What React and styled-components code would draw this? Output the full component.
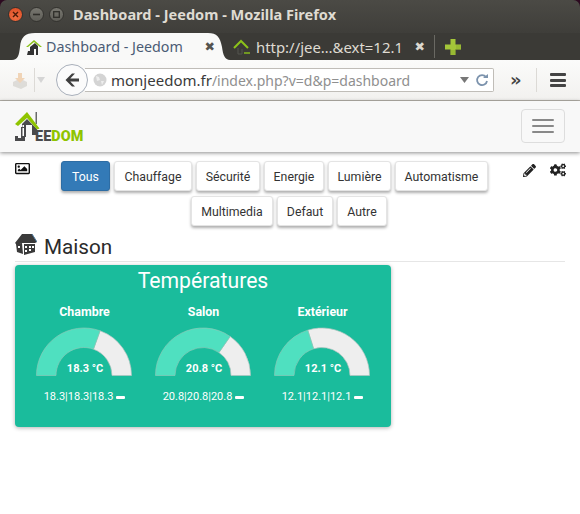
import React from "react";
import styled, { createGlobalStyle } from "styled-components";
import { FaCogs, FaPencilAlt, FaRegImage } from "react-icons/fa";

const Global = createGlobalStyle`
  html, body { margin: 0; padding: 0; background: #fff; }
  * { box-sizing: border-box; }
`;
const Page = styled.div`
  width: 580px; height: 514px; overflow: hidden; background: #fff;
  font-family: Roboto, "Liberation Sans", sans-serif; color: #333;
`;
const Frame = styled.div`
  background: #2c0a20;
`;
const TitleBar = styled.div`
  height: 33px; display: flex; align-items: center; padding: 0 0 5px 8px;
  background: linear-gradient(#4b4a45, #3f3e3a); border-radius: 7px 7px 0 0;
`;
const WinButton = styled.span`
  width: 15px; height: 15px; border-radius: 50%; margin-right: 5.5px;
  display: flex; align-items: center; justify-content: center;
  background: ${p => p.$close ? "radial-gradient(circle at 50% 70%, #ef7043, #dc4a22)" : "linear-gradient(#77766f, #5f5e58)"};
  border: 1px solid #33322e;
  color: ${p => p.$close ? "#4a1a08" : "#2f2e2a"};
`;
const WinTitle = styled.div`
  margin-left: 3.5px; font: 700 14.55px "Noto Sans", "Open Sans", sans-serif; color: #dfdbd2; white-space: nowrap;
`;
const TabStrip = styled.div`
  height: 27px; display: flex; align-items: stretch; padding-left: 12px;
  background: #3b3a36;
`;
const ActiveTab = styled.div`
  position: relative; width: 218px; display: flex; align-items: center; padding: 0 0 0 13px;
  color: #4b5c75; font: 400 14.3px "Noto Sans", sans-serif; white-space: nowrap;
`;
const TabShape = styled.svg`
  position: absolute; left: 0; top: -1px; width: 218px; height: 28px;
`;
const TabInner = styled.div`
  position: relative; display: flex; align-items: center; width: 100%;
`;
const TabLabel = styled.span`
  margin-left: 3px; flex: 1;
`;
const TabClose = styled.span`
  font: 700 12.5px "DejaVu Sans", sans-serif; color: ${p => p.$light ? "#dcd8cf" : "#55544f"};
  margin-right: ${p => p.$light ? "0" : "15px"};
`;
const OtherTab = styled.div`
  display: flex; align-items: center; margin-left: 3px; width: 201px; padding-right: 9px;
  color: #dfdbd2; font: 400 14.9px "Noto Sans", sans-serif; white-space: nowrap;
`;
const OtherLabel = styled.span`
  margin-left: 5px; flex: 1;
`;
const StripDivider = styled.span`
  width: 1px; height: 23px; background: #6a6963; align-self: center;
`;
const PlusBox = styled.span`
  margin-left: 10px; align-self: center; display: flex;
`;
const Toolbar = styled.div`
  height: 41px; display: flex; align-items: center; padding: 0 12px;
  background: linear-gradient(#fbfbfa, #f2f1ef); border-bottom: 1px solid #b6b2aa;
`;
const BackCircle = styled.span`
  width: 32px; height: 32px; border-radius: 50%; background: #fbfbfb; border: 1px solid #a9b0bb;
  display: flex; align-items: center; justify-content: center; margin-left: 10px; position: relative; z-index: 1; flex: none;
`;
const UrlBar = styled.div`
  width: 409px; height: 24px; margin-left: -3px; background: #fff; border: 1px solid #c0bdb8; border-left: 0; border-radius: 0 2px 2px 0;
  display: flex; align-items: center; padding: 0 4px 0 8px; flex: none;
  font: 400 15px "Noto Sans", sans-serif; white-space: nowrap;
`;
const UrlHost = styled.span`
  color: #3b3b3b; margin-left: 4px;
`;
const UrlPath = styled.span`
  color: #8f8f8f; flex: 1; font-size: 14px;
`;
const ToolDivider = styled.span`
  width: 1px; height: 24px; background: #dcdad6; margin: ${p => p.$m};
`;
const ToolGlyph = styled.span`
  font: 700 18px "DejaVu Sans", sans-serif; color: #444; margin-left: 16px; line-height: 1;
`;
const MenuBars = styled.span`
  display: flex; flex-direction: column; gap: 2.5px; margin-left: 13px;
`;
const MenuBar = styled.span`
  width: 16px; height: 3px; background: #444; border-radius: 1px;
`;
const Navbar = styled.div`
  height: 51px; background: #f8f8f8; display: flex; align-items: flex-start; justify-content: space-between;
  padding: 8px 15px 0; box-shadow: 0 1px 4px rgba(0,0,0,.45); position: relative;
`;
const Logo = styled.div`
  position: relative; width: 70px; height: 32px; margin-top: 2px;
`;
const LogoText = styled.span`
  position: absolute; left: 20px; bottom: 0; font: 900 14.4px/13px Roboto, sans-serif; color: #4a4a4c; letter-spacing: .1px;
`;
const LogoGreen = styled.span`
  color: #8fc400;
`;
const Burger = styled.div`
  width: 44px; height: 34px; border: 1px solid #ddd; border-radius: 4px; display: flex; flex-direction: column;
  align-items: center; justify-content: center; gap: 4px;
`;
const BurgerBar = styled.span`
  width: 22px; height: 2px; background: #888; border-radius: 1px;
`;
const FilterBar = styled.div`
  display: flex; padding: 9px 14px 0 15px; align-items: flex-start;
`;
const ImageIcon = styled.div`
  width: 15px; height: 15px; font-size: 15px; color: #111; display: flex;
`;
const FilterRows = styled.div`
  flex: 1; display: flex; flex-direction: column; gap: 5px;
`;
const FilterRow = styled.div`
  display: flex; justify-content: center; gap: 4px;
  padding: ${p => p.$second ? "0 0 0 25px" : "0 4px 0 0"};
`;
const FilterButton = styled.div`
  height: 30px; width: ${p => p.$w}px; padding-top: 1px; display: flex; align-items: center; justify-content: center; font-size: 12.3px; white-space: nowrap;
  border-radius: 3px; border: 1px solid ${p => p.$active ? "#2e6da4" : "#e4e4e4"};
  background: ${p => p.$active ? "#337ab7" : "#fff"}; color: ${p => p.$active ? "#fff" : "#333"};
  box-shadow: 0 2px 3px rgba(0,0,0,.32);
`;
const ActionIcons = styled.div`
  display: flex; gap: 14px; color: #222; font-size: 13px; padding-top: 1px; align-items: center;
`;
const SectionHead = styled.div`
  margin: 7px 15px 0; height: 29px; display: flex; align-items: flex-start; gap: 7px; border-bottom: 1px solid #e6e6e6;
  font-size: 20.7px; line-height: 28px; color: #2b2b2b;
`;
const Card = styled.div`
  width: 376px; margin: 3px 0 0 15px; height: 162px; border-radius: 4px; background: #1abc9c; color: #fff; text-align: center;
  box-shadow: 0 1px 4px rgba(0,0,0,.3);
`;
const CardTitle = styled.div`
  font-size: 21.2px; line-height: 32px; height: 32px;
`;
const Gauges = styled.div`
  display: flex; justify-content: center; margin-top: 8px; padding-left: 1px;
`;
const Widget = styled.div`
  width: 119px; display: flex; flex-direction: column; align-items: center;
`;
const WidgetName = styled.div`
  font-weight: 700; font-size: 12.4px; line-height: 14px;
`;
const GaugeBox = styled.div`
  position: relative; width: 119px; height: 50px; margin-top: 7px;
`;
const GaugeSvg = styled.svg`
  display: block; width: 119px; height: 50px;
`;
const GaugeValue = styled.div`
  position: absolute; left: 1px; right: 0; bottom: 0; font-weight: 700; font-size: 11px; line-height: 14px;
`;
const History = styled.div`
  margin-top: 14px; font-size: 11px; line-height: 14px; display: flex; align-items: center; gap: 3px; white-space: nowrap;
`;
const Dash = styled.span`
  width: 9px; height: 3px; background: #fff; border-radius: 1px;
`;

function Favicon({ size = 18 }) {
  return (
    <svg width={size} height={size} viewBox="0 0 18 18">
      <path d="M5 17V9l5-4 3 3v9h-2v-6H9v6z" fill="#333" />
      <path d="M1 9l8-7 8 7-2 0-6-5-6 5z" fill="#8cc21a" />
      <path d="M3 13h2v4H2z" fill="#333" />
    </svg>
  );
}

function Gauge({ value }) {
  const cx = 59, cy = 49.5, R = 47.5, r = 28;
  const a = Math.PI * (1 - value / 30);
  const pt = (rad, ang) => `${(cx + rad * Math.cos(ang)).toFixed(2)} ${(cy - rad * Math.sin(ang)).toFixed(2)}`;
  const fill = `M${pt(R, Math.PI)} A${R} ${R} 0 0 1 ${pt(R, a)} L${pt(r, a)} A${r} ${r} 0 0 0 ${pt(r, Math.PI)} Z`;
  const rest = `M${pt(R, a)} A${R} ${R} 0 0 1 ${pt(R, 0)} L${pt(r, 0)} A${r} ${r} 0 0 0 ${pt(r, a)} Z`;
  return (
    <GaugeSvg viewBox="0 0 119 50">
      <path d={rest} fill="#eeeeee" stroke="#b5c4c0" strokeWidth=".7" />
      <path d={fill} fill="#4fe0c0" stroke="#8cc9b8" strokeWidth=".7" />
    </GaugeSvg>
  );
}

const widgets = [
  { name: "Chambre", value: 18.3 },
  { name: "Salon", value: 20.8 },
  { name: "Extérieur", value: 12.1 },
];
const row1 = [["Tous", 49], ["Chauffage", 78], ["Sécurité", 64], ["Energie", 60], ["Lumière", 63], ["Automatisme", 93]];
const row2 = [["Multimedia", 82], ["Defaut", 56], ["Autre", 50]];

export default function App() {
  return (
    <Page>
      <Global />
      <Frame>
        <TitleBar>
          <WinButton $close>
            <svg width="7" height="7" viewBox="0 0 7 7"><path d="M1 1l5 5M6 1L1 6" stroke="currentColor" strokeWidth="1.4" /></svg>
          </WinButton>
          <WinButton>
            <svg width="7" height="7" viewBox="0 0 7 7"><path d="M0 3.5h7" stroke="currentColor" strokeWidth="1.6" /></svg>
          </WinButton>
          <WinButton>
            <svg width="7" height="7" viewBox="0 0 7 7"><rect x=".7" y=".7" width="5.6" height="5.6" fill="none" stroke="currentColor" strokeWidth="1.3" /></svg>
          </WinButton>
          <WinTitle>Dashboard - Jeedom - Mozilla Firefox</WinTitle>
        </TitleBar>
      </Frame>
      <TabStrip>
        <ActiveTab>
          <TabShape viewBox="0 0 218 28">
            <path d="M0 28C6 28 7 23 8 15 9 5 13 1 23 1H196C205 1 208 5 210 15 211 23 213 28 218 28Z" fill="#f9f9f8" />
          </TabShape>
          <TabInner>
            <Favicon />
            <TabLabel>Dashboard - Jeedom</TabLabel>
            <TabClose>✖</TabClose>
          </TabInner>
        </ActiveTab>
        <OtherTab>
          <svg width="18" height="18" viewBox="0 0 18 18">
            <path d="M1 10l7-7 7 7" fill="none" stroke="#8cc21a" strokeWidth="2" />
            <path d="M11 15h6" stroke="#8cc21a" strokeWidth="1.4" />
            <path d="M5 10v6h4v-5" fill="none" stroke="#55544f" strokeWidth="1" />
          </svg>
          <OtherLabel>http://jee…&amp;ext=12.1</OtherLabel>
          <TabClose $light>✖</TabClose>
        </OtherTab>
        <StripDivider />
        <PlusBox>
          <svg width="16" height="16" viewBox="0 0 16 16">
            <path d="M5.5 0h5v5.500h5.500v5h-5.500v5.500h-5v-5.500H0v-5h5.500z" fill="#a4c639" />
            <path d="M5.500 11h5v5h-5zM11 6h5v5h-5z" fill="#86a52b" opacity=".4" />
          </svg>
        </PlusBox>
      </TabStrip>
      <Toolbar>
        <svg width="16" height="17" viewBox="0 0 16 17" opacity=".75">
          <path d="M1 10l4-2h6l4 2v4l-6 3-8-3z" fill="#d6d4d0" />
          <path d="M6 1h4v5h3l-5 5-5-5h3z" fill="#eec9a3" />
        </svg>
        <ToolDivider $m="0 1px 0 6px" />
        <svg width="10" height="6" viewBox="0 0 10 6">
          <path d="M1 0h8L5 6z" fill="#d5d5d5" />
        </svg>
        <BackCircle>
          <svg width="16" height="16" viewBox="0 0 16 16">
            <path d="M8 1.500L1.500 8 8 14.500h3L6.300 9.600H15V6.400H6.300L11 1.500z" fill="#3f3f3f" />
          </svg>
        </BackCircle>
        <UrlBar>
          <svg width="14" height="14" viewBox="0 0 14 14">
            <circle cx="7" cy="7" r="6.500" fill="#d4d4d4" />
            <path d="M3 3l3 1 1 3-3 1zM8 8l3 0-2 4z" fill="#eee" />
          </svg>
          <UrlHost>monjeedom.fr</UrlHost>
          <UrlPath>/index.php?v=d&amp;p=dashboard</UrlPath>
          <svg width="9" height="6" viewBox="0 0 9 6"><path d="M0 0h9L4.500 6z" fill="#777" /></svg>
          <svg width="14" height="14" viewBox="0 0 14 14" style={{ marginLeft: 6 }}>
            <path d="M11 4A5 5 0 1 0 12 8" fill="none" stroke="#7c93ad" strokeWidth="1.800" />
            <path d="M8 5h5V1z" fill="#7c93ad" />
          </svg>
        </UrlBar>
        <ToolGlyph>»</ToolGlyph>
        <ToolDivider $m="0 0 0 14.500px" />
        <MenuBars>
          <MenuBar /><MenuBar /><MenuBar />
        </MenuBars>
      </Toolbar>
      <Navbar>
        <Logo>
          <svg width="32" height="32" viewBox="0 0 32 32">
            <path d="M20.500 1h1.500v12h-1.500z" fill="#6a6a6a" />
            <path d="M7 13l5-5 10 10v6h-5V14h-6v12H7z" fill="#4a4a4c" />
            <path d="M6 16h4v14H0v-5h3v2h3z" fill="#4a4a4c" />
            <path d="M7.500 17h1.500v8H7.500zM7.500 14h1.500v2H7.500z" fill="#fff" />
            <path d="M0 13L12 1l12.500 16.500-2.500 1L12 7l-9 8z" fill="#8fc400" />
          </svg>
          <LogoText>EE<LogoGreen>DOM</LogoGreen></LogoText>
        </Logo>
        <Burger>
          <BurgerBar /><BurgerBar /><BurgerBar />
        </Burger>
      </Navbar>
      <FilterBar>
        <ImageIcon><FaRegImage /></ImageIcon>
        <FilterRows>
          <FilterRow>
            {row1.map(([t, w]) => <FilterButton key={t} $w={w} $active={t === "Tous"}>{t}</FilterButton>)}
          </FilterRow>
          <FilterRow $second>
            {row2.map(([t, w]) => <FilterButton key={t} $w={w}>{t}</FilterButton>)}
          </FilterRow>
        </FilterRows>
        <ActionIcons>
          <FaPencilAlt />
          <FaCogs size={16} />
        </ActionIcons>
      </FilterBar>
      <SectionHead>
        <svg width="22" height="22" viewBox="0 0 22 22">
          <path d="M0 10L7 1h10l5 8-2 1H7L2 12z" fill="#3a3a3a" />
          <path d="M1 11l6-1 1 11-6-2zM9 11h11v8l-11 3z" fill="#3a3a3a" />
          <path d="M3 13h2v2H3zM14 13h2v2h-2zM14 16h2v2h-2zM17 13h2v2h-2zM10 13h2v2h-2zM10 17h2v2h-2z" fill="#fff" />
          <path d="M17 1l5 8" stroke="#4b7aa0" strokeWidth="1" />
        </svg>
        Maison
      </SectionHead>
      <Card>
        <CardTitle>Températures</CardTitle>
        <Gauges>
          {widgets.map(w => (
            <Widget key={w.name}>
              <WidgetName>{w.name}</WidgetName>
              <GaugeBox>
                <Gauge value={w.value} />
                <GaugeValue>{w.value} °C</GaugeValue>
              </GaugeBox>
              <History>
                {w.value}|{w.value}|{w.value}
                <Dash />
              </History>
            </Widget>
          ))}
        </Gauges>
      </Card>
    </Page>
  );
}
